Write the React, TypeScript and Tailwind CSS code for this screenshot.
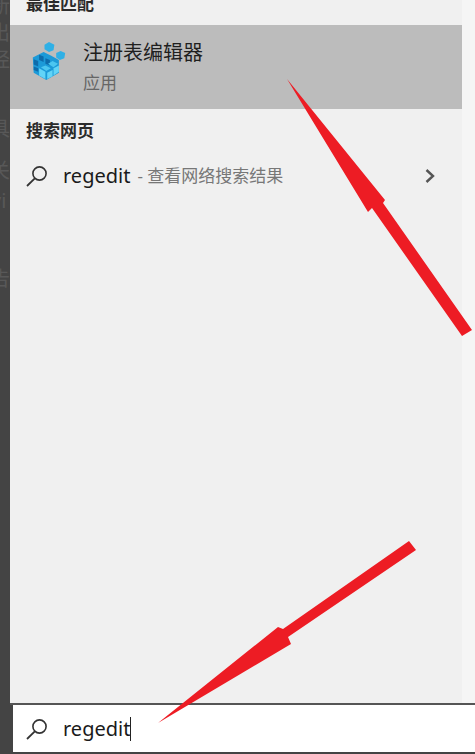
const FONT = "font-['Noto_Sans','Noto_Sans_CJK_SC',sans-serif]";

function SearchIcon() {
  return (
    <svg width="24" height="24" viewBox="0 0 24 24" fill="none" stroke="#333" className="shrink-0">
      <circle cx="14.5" cy="9.5" r="6.6" strokeWidth="1.6" />
      <path d="M9.8 14.4 L2 22" strokeWidth="1.8" />
    </svg>
  );
}

function RegistryIcon() {
  return (
    <svg width="36" height="38" viewBox="0 0 40 42" className="shrink-0 mb-[13px]">
      <path d="M20 0 L26 3 L25 9 L20 11 L15 8 L15 3 Z" fill="#2fb0e6" />
      <path d="M33 10 L38 12 L37 18 L32 20 L28 17 L28 12 Z" fill="#2fb0e6" />
      <path d="M2 17 L14 11 L22 15 L31 20 L31 34 L17 42 L3 34 Z" fill="#1c9ad8" />
      <path d="M3 19 L8 21 L8 27 L3 25 Z M9 14 L14 16 L14 22 L9 20 Z M16 18 L21 20 L21 26 L16 24 Z M3 27 L8 29 L8 33 L3 31 Z" fill="#0e6cab" />
      <path d="M9 29 L16 33 L16 41 L9 37 Z M18 34 L24 31 L24 38 L18 41 Z M25 29 L31 26 L31 33 L25 37 Z" fill="#62d4f7" />
      <path d="M16 26 L22 29 L17 32 L11 28 Z M24 21 L30 24 L25 28 L19 24 Z" fill="#4cc6f0" />
    </svg>
  );
}

function Arrows() {
  return (
    <svg width="475" height="754" viewBox="0 0 475 754" className="absolute inset-0 pointer-events-none">
      <polygon points="287,79 385,200 383,203 472,330 462,336 372,208 368,212" fill="#ed1c24" />
      <polygon points="158,723 278,627 283,629 409,541 416,550 288,637 291,644" fill="#ed1c24" />
    </svg>
  );
}

export default function App() {
  return (
    <div className={`relative w-[475px] h-[754px] overflow-hidden flex bg-[#444444] ${FONT}`}>
      <div className="w-[10px] shrink-0 overflow-hidden text-[20px] leading-[27px] text-[#585858]">
        <div className="ml-[-10px] flex flex-col">
          <span className="mt-[-8px]">新</span>
          <span>出</span>
          <span>经</span>
          <span className="mt-[42px]">具</span>
          <span className="mt-[15px]">关</span>
          <span className="mt-[3px] ml-[1px]">vi</span>
          <span className="mt-[51px]">告</span>
        </div>
      </div>
      <div className="flex-1 flex flex-col">
        <div className="flex-1 flex flex-col bg-[#f5f5f5]">
          <div className="flex-1 flex flex-col w-[452px] bg-[#f0f0f0]">
            <div className="h-[25px] overflow-hidden pl-[16px] text-[17px] font-bold leading-[17px] text-[#2b2b2b]">
              <div className="mt-[-5px]">最佳匹配</div>
            </div>
            <div className="h-[84px] bg-[#bcbcbc] flex items-center pl-[21px] gap-[15px]">
              <RegistryIcon />
              <div className="flex flex-col ml-[1px]">
                <span className="text-[20px] leading-[24px] text-[#1f1f1f]">注册表编辑器</span>
                <span className="mt-[8px] text-[17px] leading-[20px] text-[#666666]">应用</span>
              </div>
            </div>
            <div className="mt-[12px] pl-[16px] text-[17px] font-bold leading-[20px] text-[#2b2b2b]">搜索网页</div>
            <div className="mt-[19px] flex items-center pl-[15px] pr-[26px] h-[32px]">
              <SearchIcon />
              <span className="ml-[14px] text-[20px] leading-[24px] text-[#1a1a1a]">regedit</span>
              <span className="ml-[7px] text-[17px] leading-[24px] text-[#777777]">- 查看网络搜索结果</span>
              <svg width="12" height="16" viewBox="0 0 12 16" fill="none" stroke="#555" strokeWidth="2.4" className="ml-auto">
                <path d="M2.5 2 L9 8 L2.5 14" />
              </svg>
            </div>
          </div>
          <div className="h-[2px] bg-[#555555]" />
        </div>
        <div className="pl-[3px] pb-[2px]">
          <div className="h-[47px] bg-white flex items-center pl-[12px]">
            <SearchIcon />
            <span className="ml-[14px] text-[20px] leading-[24px] text-[#1a1a1a]">regedit</span>
            <span className="w-[1px] h-[24px] bg-[#222222]" />
          </div>
        </div>
      </div>
      <Arrows />
    </div>
  );
}
